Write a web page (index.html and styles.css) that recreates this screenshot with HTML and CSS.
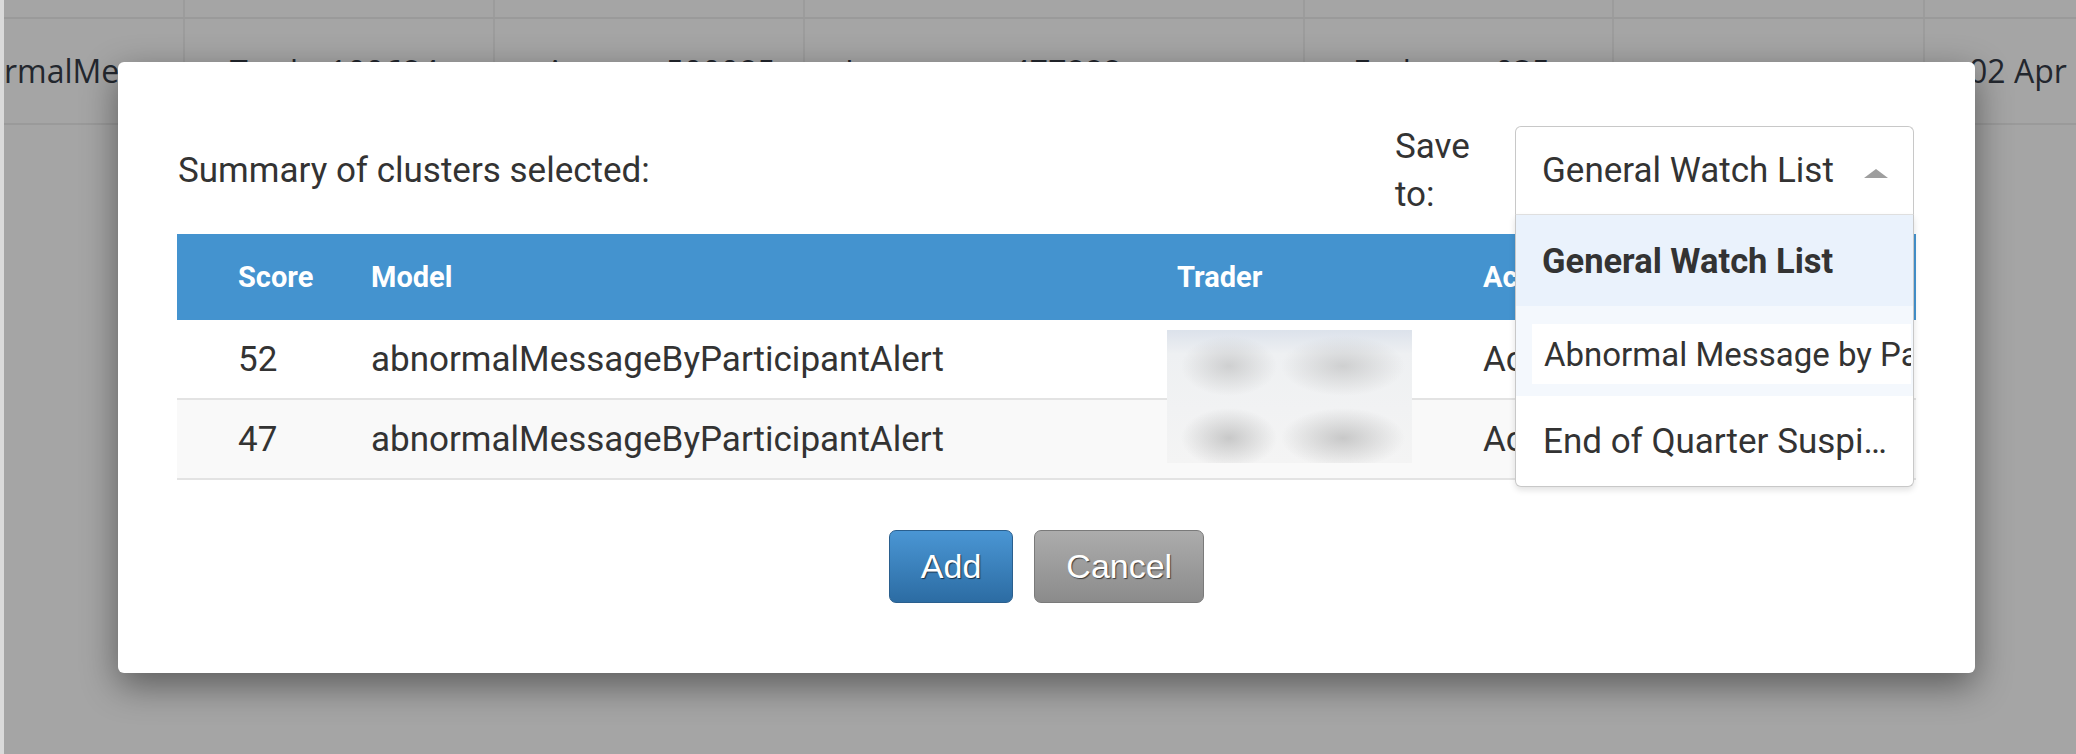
FILE: index.html
```html
<!DOCTYPE html>
<html lang="en">
<head>
<meta charset="utf-8">
<title>Add clusters to watch list</title>
<link rel="stylesheet" href="styles.css">
</head>
<body>
<div class="page">
  <div class="bg-row bg-top">
    <div class="bg-cell"></div><div class="bg-cell"></div><div class="bg-cell"></div><div class="bg-cell"></div><div class="bg-cell"></div><div class="bg-cell"></div><div class="bg-cell last"></div>
  </div>
  <div class="bg-row bg-main">
    <div class="bg-cell"><span class="bg-text t0">rmalMessageByParticipantAlert</span></div>
    <div class="bg-cell"><span class="bg-text t1">Trader100684</span></div>
    <div class="bg-cell"><span class="bg-text t2">Account500085</span></div>
    <div class="bg-cell"><span class="bg-text t3">Instrument477888</span></div>
    <div class="bg-cell"><span class="bg-text t4">Exchange035</span></div>
    <div class="bg-cell"></div>
    <div class="bg-cell last"><span class="bg-text t6">02 Apr</span></div>
  </div>
  <div class="bg-rest"></div>
</div>

<div class="modal">
  <div class="modal-head">
    <div class="summary">Summary of clusters selected:</div>
    <div class="save">
      <div class="save-label">Save to:</div>
      <div class="select">
        <div class="select-box">
          <span class="select-value">General Watch List</span>
          <span class="caret"></span>
        </div>
        <ul class="menu">
          <li class="menu-item active">General Watch List</li>
          <li class="menu-item hover"><div class="menu-inner">Abnormal Message by Participant</div></li>
          <li class="menu-item plain">End of Quarter Suspi…</li>
        </ul>
      </div>
    </div>
  </div>

  <div class="grid-wrap">
    <div class="grid-row grid-head">
      <div>Score</div><div>Model</div><div>Trader</div><div>Account</div>
    </div>
    <div class="grid-row">
      <div>52</div><div>abnormalMessageByParticipantAlert</div><div></div><div>Account500085</div>
    </div>
    <div class="grid-row alt">
      <div>47</div><div>abnormalMessageByParticipantAlert</div><div></div><div>Account500085</div>
    </div>
    <div class="redact"></div>
  </div>

  <div class="actions">
    <button class="btn btn-add">Add</button>
    <button class="btn btn-cancel">Cancel</button>
  </div>
</div>
</body>
</html>
```

FILE: styles.css
```css
html, body {
  margin: 0;
  padding: 0;
}
body {
  width: 2076px;
  height: 754px;
  overflow: hidden;
  background: #a5a5a5;
  font-family: Roboto, "Liberation Sans", Arial, sans-serif;
  position: relative;
}
.page {
  height: 754px;
  border-left: 4px solid #dadada;
  display: flex;
  flex-direction: column;
}
.bg-row {
  display: grid;
  grid-template-columns: 181px 310px 310px 500px 309px 311px 1fr;
}
.bg-top {
  height: 17px;
  border-bottom: 2px solid #9a9a9a;
}
.bg-main {
  height: 104px;
  border-bottom: 2px solid #9a9a9a;
}
.bg-rest {
  flex: 1;
}
.bg-cell {
  border-right: 2px solid #9c9c9c;
  overflow: hidden;
  white-space: nowrap;
  position: relative;
}
.bg-cell.last {
  border-right: none;
}
.bg-text {
  display: block;
  font-family: "Open Sans", "DejaVu Sans", sans-serif;
  font-size: 32px;
  line-height: 30px;
  color: #23272e;
}
.t0 { padding-top: 37px; margin-left: 0; }
.t1 { padding-top: 38px; margin-left: 45px; }
.t2 { padding-top: 38px; margin-left: 50px; }
.t3 { padding-top: 38px; margin-left: 40px; }
.t4 { padding-top: 38px; margin-left: 48px; }
.t6 { padding-top: 37px; margin-left: 44px; }

/* modal */
.modal {
  position: absolute;
  left: 118px;
  top: 62px;
  width: 1857px;
  box-sizing: border-box;
  padding: 64px 59px 70px 59px;
  background: #fff;
  border-radius: 6px;
  box-shadow: 0 12px 36px rgba(0, 0, 0, 0.45);
  color: #333;
  font-size: 35px;
}
.modal-head {
  display: flex;
  align-items: center;
  justify-content: space-between;
  height: 89px;
  margin-bottom: 19px;
}
.summary {
  padding-left: 1px;
}
.save {
  display: flex;
  align-items: center;
  margin-right: 2px;
}
.save-label {
  width: 95px;
  margin-right: 25px;
  line-height: 48px;
}
.select {
  position: relative;
  width: 399px;
}
.select-box {
  height: 89px;
  box-sizing: border-box;
  border: 1px solid #c8c8c8;
  border-bottom-color: #e3e3e3;
  border-radius: 6px 6px 0 0;
  display: flex;
  align-items: center;
  padding: 0 25px 0 26px;
  background: #fff;
}
.select-value {
  flex: 1;
  white-space: nowrap;
}
.caret {
  width: 0;
  height: 0;
  margin-top: 6px;
  border-left: 12px solid transparent;
  border-right: 12px solid transparent;
  border-bottom: 9px solid #9e9e9e;
}
.menu {
  position: absolute;
  top: 100%;
  left: 0;
  right: 0;
  margin: 0;
  padding: 0;
  list-style: none;
  background: #fff;
  border: 1px solid #c8c8c8;
  border-top: none;
  border-radius: 0 0 6px 6px;
  box-shadow: 0 3px 6px rgba(0, 0, 0, 0.12);
  z-index: 5;
  overflow: hidden;
}
.menu-item {
  height: 90px;
  box-sizing: border-box;
  display: flex;
  align-items: center;
  white-space: nowrap;
}
.menu-item.active {
  height: 91px;
  background: #eaf2fc;
  font-weight: bold;
  font-size: 34.5px;
  padding-left: 26px;
  color: #333;
}
.menu-item.hover {
  background: #f4f8fd;
  align-items: flex-start;
  padding: 18px 2px 0 16px;
}
.menu-inner {
  flex: 1;
  height: 60px;
  background: #fff;
  display: flex;
  align-items: center;
  padding-left: 12px;
  font-size: 33px;
  overflow: hidden;
  white-space: nowrap;
}
.menu-item.plain {
  padding-left: 27px;
}

/* table */
.grid-wrap {
  position: relative;
}
.grid-row {
  display: grid;
  grid-template-columns: 133px 806px 306px 1fr;
  padding-left: 61px;
  align-items: center;
  height: 80px;
  box-sizing: border-box;
  border-bottom: 2px solid #e3e3e3;
  white-space: nowrap;
  overflow: hidden;
}
.grid-row.alt {
  background: #f9f9f9;
}
.grid-head {
  height: 86px;
  background: #4493cf;
  color: #fff;
  font-weight: bold;
  font-size: 29px;
  border-bottom: none;
}
.redact {
  position: absolute;
  left: 990px;
  top: 96px;
  width: 245px;
  height: 133px;
  background:
    radial-gradient(ellipse 48px 30px at 62px 36px, rgba(175,175,175,0.5), rgba(175,175,175,0) 100%),
    radial-gradient(ellipse 62px 30px at 176px 36px, rgba(175,175,175,0.5), rgba(175,175,175,0) 100%),
    radial-gradient(ellipse 48px 30px at 62px 108px, rgba(165,165,165,0.55), rgba(165,165,165,0) 100%),
    radial-gradient(ellipse 62px 30px at 176px 108px, rgba(165,165,165,0.55), rgba(165,165,165,0) 100%),
    linear-gradient(to bottom, #dce2eb 0px, #eef0f2 24px, #f4f4f4 100%);
}

/* buttons */
.actions {
  display: flex;
  justify-content: center;
  gap: 21px;
  margin-top: 50px;
}
.btn {
  height: 73px;
  padding: 0 31px;
  font-family: "Liberation Sans", Arial, sans-serif;
  font-size: 34px;
  color: #fff;
  border-radius: 7px;
  text-shadow: 1px 1px 1px rgba(0, 0, 0, 0.6);
  cursor: pointer;
}
.btn-add {
  background: linear-gradient(to bottom, #4a96d4, #2c6ca3);
  border: 1px solid #2a5f8e;
}
.btn-cancel {
  background: linear-gradient(to bottom, #acacac, #8b8b8b);
  border: 1px solid #7a7a7a;
}
```
